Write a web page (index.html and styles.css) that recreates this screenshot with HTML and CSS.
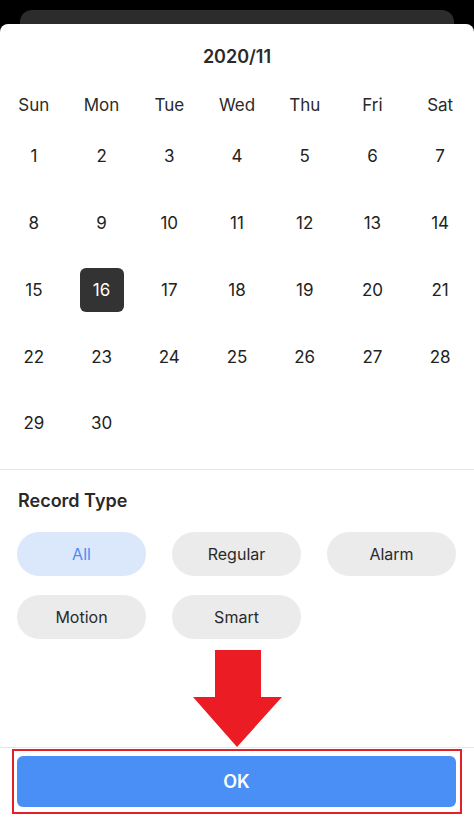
FILE: index.html
```html
<!DOCTYPE html>
<html>
<head>
<meta charset="utf-8">
<link rel="stylesheet" href="styles.css">
</head>
<body>
<div class="backcard"></div>
<div class="sheet">
  <div class="title">2020/11</div>
  <div class="weekdays">
    <span>Sun</span><span>Mon</span><span>Tue</span><span>Wed</span><span>Thu</span><span>Fri</span><span>Sat</span>
  </div>
  <div class="dates">
    <div class="day">1</div><div class="day">2</div><div class="day">3</div><div class="day">4</div><div class="day">5</div><div class="day">6</div><div class="day">7</div>
    <div class="day">8</div><div class="day">9</div><div class="day">10</div><div class="day">11</div><div class="day">12</div><div class="day">13</div><div class="day">14</div>
    <div class="day">15</div><div class="day"><span class="selected">16</span></div><div class="day">17</div><div class="day">18</div><div class="day">19</div><div class="day">20</div><div class="day">21</div>
    <div class="day">22</div><div class="day">23</div><div class="day">24</div><div class="day">25</div><div class="day">26</div><div class="day">27</div><div class="day">28</div>
    <div class="day">29</div><div class="day">30</div>
  </div>
  <div class="divider"></div>
  <div class="section-title">Record Type</div>
  <div class="pills">
    <div class="pill active">All</div>
    <div class="pill">Regular</div>
    <div class="pill">Alarm</div>
    <div class="pill">Motion</div>
    <div class="pill">Smart</div>
  </div>
  <div class="footer">
    <div class="highlight">
      <button class="ok">OK</button>
    </div>
  </div>
  <svg class="arrow" width="90" height="98" viewBox="0 0 90 98">
    <polygon points="22,0 68,0 68,47 89,47 44,97 0,47 22,47" fill="#ec1c24"/>
  </svg>
</div>
</body>
</html>
```
FILE: styles.css
```css
* { box-sizing: border-box; }
html, body { margin: 0; padding: 0; }
body {
  background: #000;
  width: 474px;
  height: 817px;
  overflow: hidden;
  font-family: Inter, "Noto Sans", "Liberation Sans", sans-serif;
  color: #222;
}
.backcard {
  margin: 10px 20px 0;
  height: 14px;
  background: #2c2c2c;
  border-radius: 12px 12px 0 0;
}
.sheet {
  position: relative;
  background: #fff;
  height: 793px;
  border-radius: 8px 8px 0 0;
  display: flex;
  flex-direction: column;
}
.title {
  margin-top: 21px;
  height: 24px;
  line-height: 24px;
  text-align: center;
  font-size: 18px;
  font-weight: 600;
  color: #2a2a2a;
}
.weekdays {
  margin-top: 18px;
  height: 36px;
  display: grid;
  grid-template-columns: repeat(7, 1fr);
  align-items: center;
  text-align: center;
  font-size: 17px;
  color: #2a2a2a;
}
.dates {
  display: grid;
  grid-template-columns: repeat(7, 1fr);
  grid-auto-rows: 66.75px;
  font-size: 17px;
}
.day {
  display: flex;
  align-items: center;
  justify-content: center;
  color: #222;
}
.selected {
  width: 44px;
  height: 44px;
  border-radius: 6px;
  background: #333;
  color: #fff;
  display: flex;
  align-items: center;
  justify-content: center;
}
.divider {
  margin-top: 12px;
  height: 1px;
  background: #e6e6e6;
}
.section-title {
  margin-top: 19px;
  padding-left: 18px;
  height: 24px;
  line-height: 24px;
  font-size: 18px;
  font-weight: 600;
  color: #2a2a2a;
}
.pills {
  margin-top: 19px;
  padding-left: 17px;
  display: grid;
  grid-template-columns: repeat(3, 129px);
  column-gap: 26px;
  row-gap: 19px;
}
.pill {
  height: 44px;
  border-radius: 22px;
  background: #ebebeb;
  display: flex;
  align-items: center;
  justify-content: center;
  font-size: 16px;
  color: #2a2a2a;
}
.pill.active {
  background: #dbe8fc;
  color: #4b8ef1;
}
.footer {
  margin-top: auto;
  border-top: 1px solid #e6e6e6;
  padding: 1px 12px 3px;
}
.highlight {
  border: 2px solid #e3202a;
  padding: 5px 4px 5px 3px;
}
.ok {
  display: block;
  width: 100%;
  height: 51px;
  border: none;
  border-radius: 6px;
  background: #4a8ff5;
  color: #fff;
  font-family: inherit;
  font-size: 18px;
  font-weight: 600;
}
.arrow {
  position: absolute;
  left: 193px;
  top: 626px;
}
```
